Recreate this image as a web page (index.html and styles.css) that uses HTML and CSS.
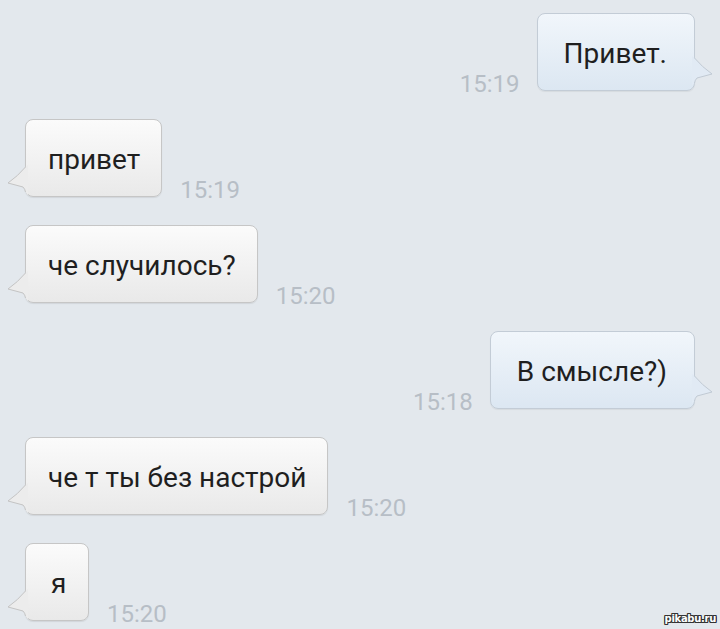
FILE: index.html
```html
<!DOCTYPE html>
<html lang="ru">
<head>
<meta charset="utf-8">
<link rel="stylesheet" href="styles.css">
</head>
<body>
<div class="chat">
  <div class="row out">
    <span class="time">15:19</span>
    <div class="bubble">Привет.<svg class="tail" width="22" height="30" viewBox="0 0 22 30"><path class="tf" d="M22 0 L19.5 2 Q12 11 2 18 L17 22 Q19 24 19.5 27 L22 30 Z"/><path class="ts" d="M19.5 2 Q12 11 2 18 L17 22 Q19 24 19.5 27"/></svg></div>
  </div>
  <div class="row in">
    <div class="bubble">привет<svg class="tail" width="22" height="30" viewBox="0 0 22 30"><path class="tf" d="M22 0 L19.5 2 Q12 11 2 18 L17 22 Q19 24 19.5 27 L22 30 Z"/><path class="ts" d="M19.5 2 Q12 11 2 18 L17 22 Q19 24 19.5 27"/></svg></div>
    <span class="time">15:19</span>
  </div>
  <div class="row in">
    <div class="bubble">че случилось?<svg class="tail" width="22" height="30" viewBox="0 0 22 30"><path class="tf" d="M22 0 L19.5 2 Q12 11 2 18 L17 22 Q19 24 19.5 27 L22 30 Z"/><path class="ts" d="M19.5 2 Q12 11 2 18 L17 22 Q19 24 19.5 27"/></svg></div>
    <span class="time">15:20</span>
  </div>
  <div class="row out">
    <span class="time">15:18</span>
    <div class="bubble">В смысле?)<svg class="tail" width="22" height="30" viewBox="0 0 22 30"><path class="tf" d="M22 0 L19.5 2 Q12 11 2 18 L17 22 Q19 24 19.5 27 L22 30 Z"/><path class="ts" d="M19.5 2 Q12 11 2 18 L17 22 Q19 24 19.5 27"/></svg></div>
  </div>
  <div class="row in">
    <div class="bubble">че т ты без настрой<svg class="tail" width="22" height="30" viewBox="0 0 22 30"><path class="tf" d="M22 0 L19.5 2 Q12 11 2 18 L17 22 Q19 24 19.5 27 L22 30 Z"/><path class="ts" d="M19.5 2 Q12 11 2 18 L17 22 Q19 24 19.5 27"/></svg></div>
    <span class="time">15:20</span>
  </div>
  <div class="row in">
    <div class="bubble short">я<svg class="tail" width="22" height="30" viewBox="0 0 22 30"><path class="tf" d="M22 0 L19.5 2 Q12 11 2 18 L17 22 Q19 24 19.5 27 L22 30 Z"/><path class="ts" d="M19.5 2 Q12 11 2 18 L17 22 Q19 24 19.5 27"/></svg></div>
    <span class="time">15:20</span>
  </div>
</div>
<div class="watermark">pikabu.ru</div>
</body>
</html>
```
FILE: styles.css
```css
html, body {
  margin: 0;
  padding: 0;
}
body {
  width: 720px;
  height: 629px;
  overflow: hidden;
  background: #e3e8ed;
  font-family: Roboto, "Noto Sans", sans-serif;
  position: relative;
}
.chat {
  display: flex;
  flex-direction: column;
  gap: 28px;
  padding-top: 13px;
}
.row {
  display: flex;
  align-items: flex-end;
}
.row.out {
  justify-content: flex-end;
  padding-right: 25px;
  gap: 17px;
}
.row.in {
  justify-content: flex-start;
  padding-left: 25px;
  gap: 18px;
}
.bubble {
  position: relative;
  box-sizing: border-box;
  height: 78px;
  font-size: 28px;
  line-height: 34px;
  color: #1f1f1f;
  border-radius: 8px;
  white-space: nowrap;
}
.in .bubble {
  padding: 23px 21px 0 22px;
  background: linear-gradient(#fbfbfb, #e9e9e9);
  border: 1px solid #c6c6c6;
  box-shadow: 0 1px 1px rgba(0,0,0,0.08);
}
.in .bubble.short {
  min-width: 64px;
  padding-left: 25px;
}
.out .bubble {
  padding: 23px 27px 0 26px;
  background: linear-gradient(#f1f6fb, #dce7f2);
  border: 1px solid #c3ccd6;
  box-shadow: 0 1px 1px rgba(0,0,0,0.06);
}
.tail {
  position: absolute;
  display: block;
}
.in .tail {
  left: -20px;
  top: 45px;
}
.out .tail {
  right: -20px;
  top: 42px;
  transform: scaleX(-1);
}
.in .tf { fill: #ececec; }
.out .tf { fill: #e1eaf4; }
.ts {
  fill: none;
  stroke-width: 1;
}
.in .ts { stroke: #c4c4c4; }
.out .ts { stroke: #c1cad4; }
.time {
  font-size: 24px;
  line-height: 24px;
  color: #b7bec6;
  margin-bottom: -5px;
}
.watermark {
  position: absolute;
  right: 4px;
  bottom: 5px;
  font-family: "DejaVu Sans", sans-serif;
  font-weight: bold;
  font-size: 10px;
  letter-spacing: -0.3px;
  color: #ffffff;
  text-shadow: 1px 0 0 #333, -1px 0 0 #333, 0 1px 0 #333, 0 -1px 0 #333, 1px 1px 0 #333, -1px -1px 0 #333, 1px -1px 0 #333, -1px 1px 0 #333;
}
```
